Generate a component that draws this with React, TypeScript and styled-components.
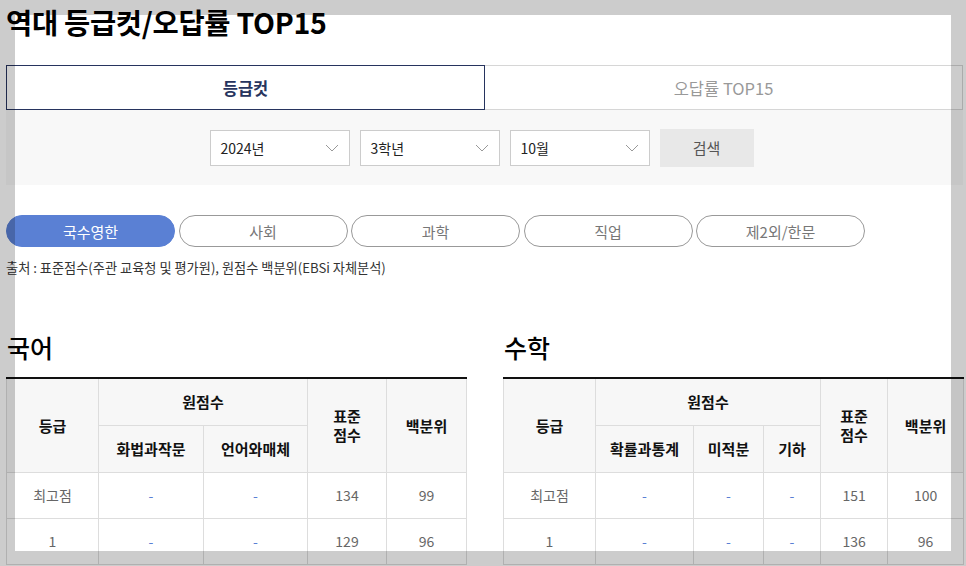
import React from 'react';
import styled, { createGlobalStyle } from 'styled-components';

const GlobalStyle = createGlobalStyle`
  html, body {
    margin: 0;
    padding: 0;
    background: #fff;
    overflow: hidden;
  }
  body {
    font-family: 'Noto Sans CJK KR', 'Noto Sans', sans-serif;
    color: #111;
  }
  * {
    box-sizing: border-box;
  }
`;

const Page = styled.div`
  width: 966px;
  padding: 0 3px 0 6px;
`;

const Title = styled.h1`
  margin: 0;
  padding-top: 4px;
  height: 65px;
  font-size: 28.5px;
  font-weight: 700;
  line-height: 36px;
  color: #000;
  letter-spacing: -0.3px;
`;

const TabRow = styled.div`
  display: flex;
  height: 45px;
`;

const Tab = styled.div<{ $active?: boolean }>`
  flex: 1;
  display: flex;
  align-items: center;
  justify-content: center;
  font-size: 16.5px;
  font-weight: ${p => (p.$active ? 700 : 400)};
  color: ${p => (p.$active ? '#27345e' : '#999')};
  border: 1px solid ${p => (p.$active ? '#27345e' : '#d6d6d6')};
  ${p => (!p.$active ? 'border-left: none;' : '')}
  background: #fff;
`;

const FilterBar = styled.div`
  display: flex;
  align-items: center;
  justify-content: center;
  gap: 10px;
  height: 75px;
  padding-right: 6px;
  background: #f8f8f8;
`;

const Select = styled.div`
  display: flex;
  align-items: center;
  justify-content: space-between;
  width: 140px;
  height: 36px;
  padding: 0 10px 0 10px;
  background: #fff;
  border: 1px solid #ccc;
  font-size: 14px;
  color: #222;
`;

const SearchButton = styled.button`
  width: 94px;
  height: 38px;
  border: none;
  background: #e8e8e8;
  font-family: inherit;
  font-size: 15px;
  color: #555;
`;

const PillRow = styled.div`
  display: flex;
  gap: 3.5px;
  margin-top: 30px;
`;

const Pill = styled.div<{ $active?: boolean }>`
  width: 169px;
  height: 32px;
  display: flex;
  align-items: center;
  justify-content: center;
  border-radius: 16px;
  font-size: 15px;
  color: ${p => (p.$active ? '#fff' : '#777')};
  background: ${p => (p.$active ? '#5a80d4' : '#fff')};
  border: 1px solid ${p => (p.$active ? '#5a80d4' : '#999')};
`;

const Source = styled.p`
  margin: 11px 0 0;
  font-size: 13.2px;
  line-height: 19px;
  color: #333;
`;

const Columns = styled.div`
  display: grid;
  grid-template-columns: 460px 460px;
  gap: 37px;
  margin-top: 52px;
`;

const SubjectTitle = styled.h2`
  margin: 0 0 12px 1px;
  font-size: 25px;
  font-weight: 500;
  line-height: 36px;
  color: #000;
`;

const Table = styled.table`
  width: 100%;
  border-collapse: collapse;
  border-top: 2px solid #111;
  table-layout: fixed;

  th, td {
    border: 1px solid #ddd;
    text-align: center;
    padding: 0;
  }
  th {
    background: #f7f7f7;
    font-size: 15px;
    font-weight: 700;
    color: #111;
    line-height: 19px;
  }
  td {
    font-size: 14px;
    color: #666;
  }
  thead tr {
    height: 47px;
  }
  tbody tr {
    height: 46px;
  }
`;

const Dash = styled.span`
  color: #5a80d4;
`;

const Chevron = () => (
  <svg width="14" height="8" viewBox="0 0 14 8" fill="none">
    <path d="M1 1l6 6 6-6" stroke="#999" strokeWidth="1" />
  </svg>
);

type Row = { grade: string; raw: string[]; std: number; pct: number };

const koreanRows: Row[] = [
  { grade: '최고점', raw: ['-', '-'], std: 134, pct: 99 },
  { grade: '1', raw: ['-', '-'], std: 129, pct: 96 },
];

const mathRows: Row[] = [
  { grade: '최고점', raw: ['-', '-', '-'], std: 151, pct: 100 },
  { grade: '1', raw: ['-', '-', '-'], std: 136, pct: 96 },
];

const ScoreTable: React.FC<{ widths: number[]; subs: string[]; rows: Row[] }> = ({ widths, subs, rows }) => (
  <Table>
    <colgroup>
      {widths.map((w, i) => (
        <col key={i} style={{ width: w }} />
      ))}
    </colgroup>
    <thead>
      <tr>
        <th rowSpan={2}>등급</th>
        <th colSpan={subs.length}>원점수</th>
        <th rowSpan={2}>
          표준
          <br />
          점수
        </th>
        <th rowSpan={2}>백분위</th>
      </tr>
      <tr>
        {subs.map(s => (
          <th key={s}>{s}</th>
        ))}
      </tr>
    </thead>
    <tbody>
      {rows.map(r => (
        <tr key={r.grade}>
          <td>{r.grade}</td>
          {r.raw.map((v, i) => (
            <td key={i}>
              <Dash>{v}</Dash>
            </td>
          ))}
          <td>{r.std}</td>
          <td>{r.pct}</td>
        </tr>
      ))}
    </tbody>
  </Table>
);

const Overlay = styled.div`
  position: fixed;
  left: 15px;
  top: 15px;
  width: 936px;
  height: 536px;
  box-shadow: 0 0 0 3000px rgba(0, 0, 0, 0.2);
  pointer-events: none;
`;

const App: React.FC = () => {
  const pills = ['국수영한', '사회', '과학', '직업', '제2외/한문'];
  return (
    <>
      <GlobalStyle />
      <Page>
        <Title>역대 등급컷/오답률 TOP15</Title>
        <TabRow>
          <Tab $active>등급컷</Tab>
          <Tab>오답률 TOP15</Tab>
        </TabRow>
        <FilterBar>
          <Select>
            2024년
            <Chevron />
          </Select>
          <Select>
            3학년
            <Chevron />
          </Select>
          <Select>
            10월
            <Chevron />
          </Select>
          <SearchButton>검색</SearchButton>
        </FilterBar>
        <PillRow>
          {pills.map((p, i) => (
            <Pill key={p} $active={i === 0}>
              {p}
            </Pill>
          ))}
        </PillRow>
        <Source>출처 : 표준점수(주관 교육청 및 평가원), 원점수 백분위(EBSi 자체분석)</Source>
        <Columns>
          <div>
            <SubjectTitle>국어</SubjectTitle>
            <ScoreTable widths={[92, 105, 104, 79, 80]} subs={['화법과작문', '언어와매체']} rows={koreanRows} />
          </div>
          <div>
            <SubjectTitle>수학</SubjectTitle>
            <ScoreTable widths={[92, 98, 70, 57, 67, 76]} subs={['확률과통계', '미적분', '기하']} rows={mathRows} />
          </div>
        </Columns>
      </Page>
      <Overlay />
    </>
  );
};

export default App;
